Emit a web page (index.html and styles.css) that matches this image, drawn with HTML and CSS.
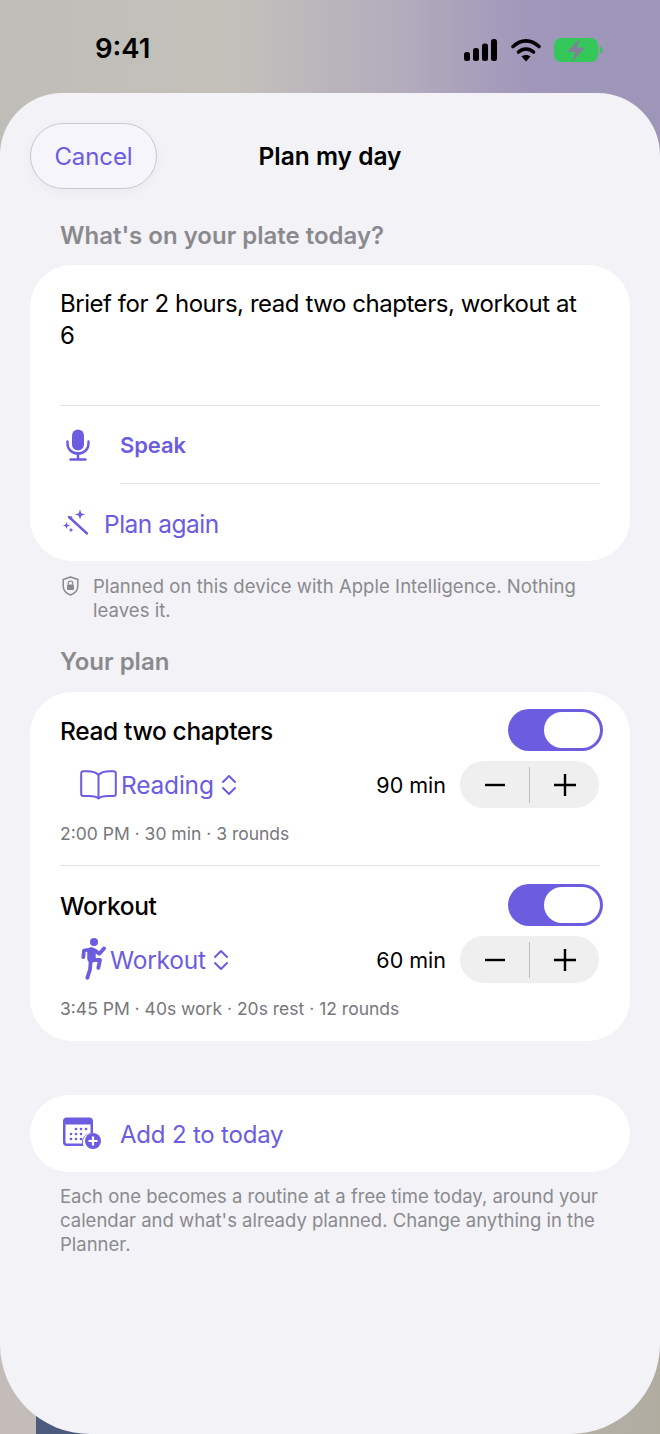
FILE: index.html
```html
<!doctype html>
<html>

<head>
    <meta charset="utf-8" />
    <title>Plan my day</title>
    <link rel="stylesheet" href="styles.css">
</head>

<body>

    <div class="main">

        <div class="wallpaper-patch"></div>

        <div class="status-bar">
            <span class="time">9:41</span>
            <div class="status-icons">
                <svg width="34" height="24" viewBox="0 0 34 24">
                    <rect x="0" y="14" width="6" height="9" rx="2.5" fill="#000" />
                    <rect x="9" y="10" width="6" height="13" rx="2.500" fill="#000" />
                    <rect x="18" y="5.500" width="6" height="17.500" rx="2.500" fill="#000" />
                    <rect x="27" y="1" width="6" height="22" rx="2.500" fill="#000" />
                </svg>
                <svg width="32" height="24" viewBox="0 0 32 24">
                    <path d="M3 8.500C11 1 21 1 29 8.500" fill="none" stroke="#000" stroke-width="3.600" stroke-linecap="round" />
                    <path d="M8.500 14C13 10 19 10 23.500 14" fill="none" stroke="#000" stroke-width="3.600" stroke-linecap="round" />
                    <path d="M16 23.500L11.500 18.500C14 16.500 18 16.500 20.500 18.500Z" fill="#000" />
                </svg>
                <svg width="50" height="26" viewBox="0 0 50 26">
                    <rect x="0" y="1" width="44" height="24" rx="7" fill="#34c759" />
                    <path d="M45.500 9.500C48 10 49 11.500 49 13C49 14.500 48 16 45.500 16.500Z" fill="#34c759" />
                    <path d="M26 1L13 15H21L18 25L31 10.500H23Z" fill="#83809a" />
                </svg>
            </div>
        </div>

        <div class="sheet">

            <div class="sheet-header">
                <button class="cancel-btn">Cancel</button>
                <div class="sheet-title">Plan my day</div>
            </div>

            <div class="section-label first-label">What's on your plate today?</div>

            <div class="card prompt-card">
                <div class="prompt-text">Brief for 2 hours, read two chapters, workout at 6</div>
                <div class="speak-row">
                    <svg class="mic-icon" width="24" height="32" viewBox="0 0 24 32">
                        <rect x="6" y="0.500" width="12" height="21" rx="6" fill="#6b5ce0" />
                        <path d="M1.500 12.500V14.500C1.500 20.500 6 24.500 12 24.500C18 24.500 22.500 20.500 22.500 14.500V12.500" fill="none" stroke="#6b5ce0" stroke-width="2.400" stroke-linecap="round" />
                        <path d="M12 24.500V30M4.500 30.500H19.500" fill="none" stroke="#6b5ce0" stroke-width="2.400" stroke-linecap="round" />
                    </svg>
                    <span class="speak-text">Speak</span>
                </div>
                <div class="plan-row">
                    <svg class="wand-icon" width="29" height="27" viewBox="0 0 29 27">
                        <path d="M9 8L27 24.500" fill="none" stroke="#6b5ce0" stroke-width="2.400" stroke-linecap="round" />
                        <path d="M9.500 10L12 7.500" fill="none" stroke="#6b5ce0" stroke-width="1.400" />
                        <path d="M20 0.500L21.300 4.200L25 5.500L21.300 6.800L20 10.500L18.700 6.800L15 5.500L18.700 4.200Z" fill="#6b5ce0" />
                        <path d="M6.500 13L7.400 15.600L10 16.500L7.400 17.400L6.500 20L5.600 17.400L3 16.500L5.600 15.600Z" fill="#6b5ce0" />
                        <path d="M11 18.500L11.700 20.300L13.500 21L11.700 21.700L11 23.500L10.300 21.700L8.500 21L10.300 20.300Z" fill="#6b5ce0" />
                    </svg>
                    <span class="plan-text">Plan again</span>
                </div>
            </div>

            <div class="privacy-note">
                <svg class="shield-icon" width="17" height="20" viewBox="0 0 17 20">
                    <path d="M8.500 1L15.800 3.500V10C15.800 14.500 12.500 17.500 8.500 19C4.500 17.500 1.200 14.500 1.200 10V3.500Z" fill="none" stroke="#8a8a8e" stroke-width="1.500" stroke-linejoin="round" />
                    <rect x="5" y="8.500" width="7" height="5.500" rx="1" fill="#8a8a8e" />
                    <path d="M6.300 8.500V7C6.300 4.500 10.700 4.500 10.700 7V8.500" fill="none" stroke="#8a8a8e" stroke-width="1.200" />
                </svg>
                <span>Planned on this device with Apple Intelligence. Nothing leaves it.</span>
            </div>

            <div class="section-label plan-label">Your plan</div>

            <div class="card plan-card">

                <div class="routine">
                    <div class="routine-top">
                        <span class="routine-name">Read two chapters</span>
                        <div class="toggle"><span class="thumb"></span></div>
                    </div>
                    <div class="routine-middle">
                        <div class="picker">
                            <svg class="book-icon" width="37" height="30" viewBox="0 0 37 30">
                                <path d="M18.500 5C16 2 12 1.200 7 1.200H3.500C2.200 1.200 1.200 2.200 1.200 3.500V24C1.200 25.200 2.200 26 3.500 26H9C13 26 16.500 26.500 18.500 28.500C20.500 26.500 24 26 28 26H33.500C34.800 26 35.800 25.200 35.800 24V3.500C35.800 2.200 34.800 1.200 33.500 1.200H30C25 1.200 21 2 18.500 5ZM18.500 5V28" fill="none" stroke="#6b5ce0" stroke-width="2" stroke-linejoin="round" />
                            </svg>
                            <span class="picker-text">Reading</span>
                            <svg class="chevrons" width="16" height="22" viewBox="0 0 16 22">
                                <path d="M2 8L8 2L14 8M2 14L8 20L14 14" fill="none" stroke="#6b5ce0" stroke-width="2" stroke-linecap="round" stroke-linejoin="round" />
                            </svg>
                        </div>
                        <span class="minutes">90 min</span>
                        <div class="stepper">
                            <span class="step">
                                <svg width="20" height="20" viewBox="0 0 20 20"><path d="M0 10H20" stroke="#000" stroke-width="2.400" /></svg>
                            </span>
                            <span class="step-line"></span>
                            <span class="step">
                                <svg width="22" height="22" viewBox="0 0 22 22"><path d="M0 11H22M11 0V22" stroke="#000" stroke-width="2.400" /></svg>
                            </span>
                        </div>
                    </div>
                    <div class="routine-meta">2:00 PM · 30 min · 3 rounds</div>
                </div>

                <div class="routine second">
                    <div class="routine-top">
                        <span class="routine-name">Workout</span>
                        <div class="toggle"><span class="thumb"></span></div>
                    </div>
                    <div class="routine-middle">
                        <div class="picker">
                            <svg class="run-icon" width="25" height="44" viewBox="0 -3 25 44">
                                <circle cx="13" cy="1" r="4" fill="#6b5ce0" />
                                <path d="M10.500 10.500V17.500" fill="none" stroke="#6b5ce0" stroke-width="8.500" stroke-linecap="round" />
                                <path d="M9 8.500L3 9.500L2.300 16M14 9.500L18.300 12.800L23 7.500" fill="none" stroke="#6b5ce0" stroke-width="3.800" stroke-linecap="round" stroke-linejoin="round" />
                                <path d="M10.700 19H19L17.300 26.800M9.700 20L9 28.500L6.300 36.800" fill="none" stroke="#6b5ce0" stroke-width="3.800" stroke-linecap="round" stroke-linejoin="round" />
                            </svg>
                            <span class="picker-text">Workout</span>
                            <svg class="chevrons" width="16" height="22" viewBox="0 0 16 22">
                                <path d="M2 8L8 2L14 8M2 14L8 20L14 14" fill="none" stroke="#6b5ce0" stroke-width="2" stroke-linecap="round" stroke-linejoin="round" />
                            </svg>
                        </div>
                        <span class="minutes">60 min</span>
                        <div class="stepper">
                            <span class="step">
                                <svg width="20" height="20" viewBox="0 0 20 20"><path d="M0 10H20" stroke="#000" stroke-width="2.400" /></svg>
                            </span>
                            <span class="step-line"></span>
                            <span class="step">
                                <svg width="22" height="22" viewBox="0 0 22 22"><path d="M0 11H22M11 0V22" stroke="#000" stroke-width="2.400" /></svg>
                            </span>
                        </div>
                    </div>
                    <div class="routine-meta">3:45 PM · 40s work · 20s rest · 12 rounds</div>
                </div>

            </div>

            <div class="card add-card">
                <svg class="calendar-icon" width="40" height="32" viewBox="0 0 40 32">
                    <path d="M4.500 0.500H27.500C29.500 0.500 31 2 31 4V16A9.500 9.500 0 0 0 21.500 29H4.500C2.500 29 1 27.500 1 25.500V4C1 2 2.500 0.500 4.500 0.500Z" fill="#6b5ce0" />
                    <path d="M3.500 7.500H28.500V16A9.500 9.500 0 0 0 20 26.500H5C4 26.500 3.500 26 3.500 25Z" fill="#fff" />
                    <g fill="#6b5ce0">
                        <circle cx="14" cy="12" r="1.300" /><circle cx="19" cy="12" r="1.300" /><circle cx="24" cy="12" r="1.300" />
                        <circle cx="9" cy="17" r="1.300" /><circle cx="14" cy="17" r="1.300" /><circle cx="19" cy="17" r="1.300" />
                        <circle cx="9" cy="22" r="1.300" /><circle cx="14" cy="22" r="1.300" /><circle cx="19" cy="22" r="1.300" />
                    </g>
                    <circle cx="31" cy="24" r="8" fill="#6b5ce0" />
                    <path d="M26.500 24H35.500M31 19.500V28.500" stroke="#fff" stroke-width="2.200" />
                </svg>
                <span class="add-text">Add 2 to today</span>
            </div>

            <div class="footer-note">Each one becomes a routine at a free time today, around your calendar and what's already planned. Change anything in the Planner.</div>

        </div>

    </div>

</body>

</html>
```

FILE: styles.css
```css
html,
body {
    margin: 0 0;
    height: 100%;
    font-family: Inter, "Liberation Sans", sans-serif;
}

.main {
    position: relative;
    width: 660px;
    height: 1434px;
    overflow: hidden;
    background: linear-gradient(90deg, #bfbdb7 0%, #c4c1bb 35%, #b1abbc 62%, #a097ba 80%, #9d96b9 100%);
}

/* bit of the wallpaper showing under the sheet corners */
.main:after {
    content: '';
    position: absolute;
    left: 0;
    right: 0;
    bottom: 0;
    height: 120px;
    background: linear-gradient(90deg, #c4bcb8 0%, #c0bab6 50%, #b0aca0 100%);
}

.wallpaper-patch {
    position: absolute;
    z-index: 1;
    left: 36px;
    bottom: 0;
    width: 70px;
    height: 30px;
    background-color: #4c5a7c;
}

.status-bar {
    height: 93px;
    box-sizing: border-box;
    padding: 33px 56px 0 95px;
    display: flex;
    justify-content: space-between;
    align-items: flex-start;
}

.status-bar .time {
    font-size: 27.500px;
    line-height: 30px;
    font-weight: 600;
    color: #000;
}

.status-icons {
    display: flex;
    align-items: center;
    gap: 12px;
    padding-top: 4px;
}

.sheet {
    position: relative;
    z-index: 2;
    height: 1341px;
    box-sizing: border-box;
    padding: 30px 30px 0 30px;
    background-color: #f2f2f7;
    border-radius: 62px 62px 90px 90px;
}

.sheet-header {
    position: relative;
    height: 66px;
    display: flex;
    justify-content: center;
    align-items: center;
}

.cancel-btn {
    position: absolute;
    left: 0;
    top: 0;
    width: 127px;
    height: 66px;
    padding: 0;
    font-family: inherit;
    font-size: 24px;
    letter-spacing: -0.1px;
    color: #6b5ce0;
    background-color: #f6f5fb;
    border: 1px solid #c9c9ce;
    border-radius: 33px;
    box-shadow: 0 3px 12px rgba(0, 0, 0, 0.04);
}

.sheet-title {
    font-size: 24.500px;
    font-weight: 600;
    color: #000;
}

.section-label {
    padding-left: 30px;
    font-size: 24px;
    line-height: 28px;
    font-weight: 600;
    color: #8a8a8e;
}

.first-label {
    margin-top: 33px;
}

.card {
    background-color: white;
    border-radius: 42px;
}

.prompt-card {
    margin-top: 15px;
    height: 296px;
    box-sizing: border-box;
    padding: 23px 30px 0 30px;
}

.prompt-text {
    height: 117px;
    padding-right: 16px;
    font-size: 24px;
    line-height: 32px;
    letter-spacing: -0.45px;
    color: #000;
    border-bottom: 1px solid #e2e2e4;
}

.speak-row {
    height: 77px;
    display: flex;
    align-items: center;
}

.mic-icon {
    margin-left: 6px;
}

.speak-text {
    margin-left: 30px;
    font-size: 22px;
    letter-spacing: -0.1px;
    font-weight: 600;
    color: #6b5ce0;
}

.plan-row {
    position: relative;
    height: 80px;
    display: flex;
    align-items: center;
    margin-left: 60px;
    border-top: 1px solid #e2e2e4;
}

.wand-icon {
    position: absolute;
    left: -60px;
    top: 25px;
}

.plan-text {
    margin-left: -16px;
    font-size: 24.500px;
    letter-spacing: -0.5px;
    color: #6b5ce0;
}

.privacy-note {
    display: flex;
    align-items: flex-start;
    gap: 14px;
    margin-top: 13px;
    padding: 0 30px 0 32px;
    font-size: 18.500px;
    line-height: 24px;
    letter-spacing: 0.05px;
    color: #8a8a8e;
}

.shield-icon {
    flex-shrink: 0;
    margin-top: 2px;
}

.plan-label {
    margin-top: 26px;
}

.plan-card {
    margin-top: 16px;
    height: 349px;
    box-sizing: border-box;
    padding: 17px 30px 0 30px;
}

.routine-top {
    height: 42px;
    display: flex;
    justify-content: space-between;
    align-items: center;
}

.routine-name {
    margin-top: 2px;
    font-size: 24.500px;
    letter-spacing: -0.35px;
    font-weight: 500;
    color: #000;
}

.toggle {
    width: 95px;
    height: 42px;
    margin-right: -3px;
    box-sizing: border-box;
    padding: 3px 3px 3px 36px;
    background-color: #6b5ce0;
    border-radius: 21px;
}

.toggle .thumb {
    display: block;
    height: 36px;
    background-color: white;
    border-radius: 18px;
}

.routine-middle {
    height: 47px;
    margin-top: 10px;
    display: flex;
    align-items: center;
}

.picker {
    flex-grow: 1;
    display: flex;
    align-items: center;
    padding-left: 20px;
    color: #6b5ce0;
}

.run-icon {
    margin-left: 1px;
}

.picker-text {
    margin-left: 4px;
    margin-right: 7px;
    font-size: 24.500px;
    letter-spacing: -0.2px;
}

.minutes {
    font-size: 21.500px;
    color: #000;
    margin-right: 14px;
}

.stepper {
    width: 139px;
    height: 47px;
    margin-right: 1px;
    display: flex;
    align-items: center;
    background-color: #efefef;
    border-radius: 24px;
}

.step {
    flex: 1;
    display: flex;
    justify-content: center;
    align-items: center;
}

.step-line {
    width: 1px;
    height: 36px;
    background-color: #bdbdc0;
}

.routine-meta {
    margin-top: 15px;
    font-size: 17.500px;
    line-height: 22px;
    color: #77777c;
}

.routine.second {
    margin-top: 20px;
    padding-top: 18px;
    border-top: 1px solid #e2e2e4;
}

.add-card {
    margin-top: 54px;
    height: 77px;
    box-sizing: border-box;
    padding-left: 32px;
    display: flex;
    align-items: center;
    border-radius: 39px;
}

.calendar-icon {
    margin-bottom: 2px;
}

.add-text {
    margin-left: 18px;
    padding-top: 2px;
    font-size: 24px;
    letter-spacing: -0.2px;
    color: #6b5ce0;
}

.footer-note {
    margin-top: 12px;
    padding: 0 30px;
    font-size: 18.500px;
    line-height: 24px;
    color: #8a8a8e;
}
```
